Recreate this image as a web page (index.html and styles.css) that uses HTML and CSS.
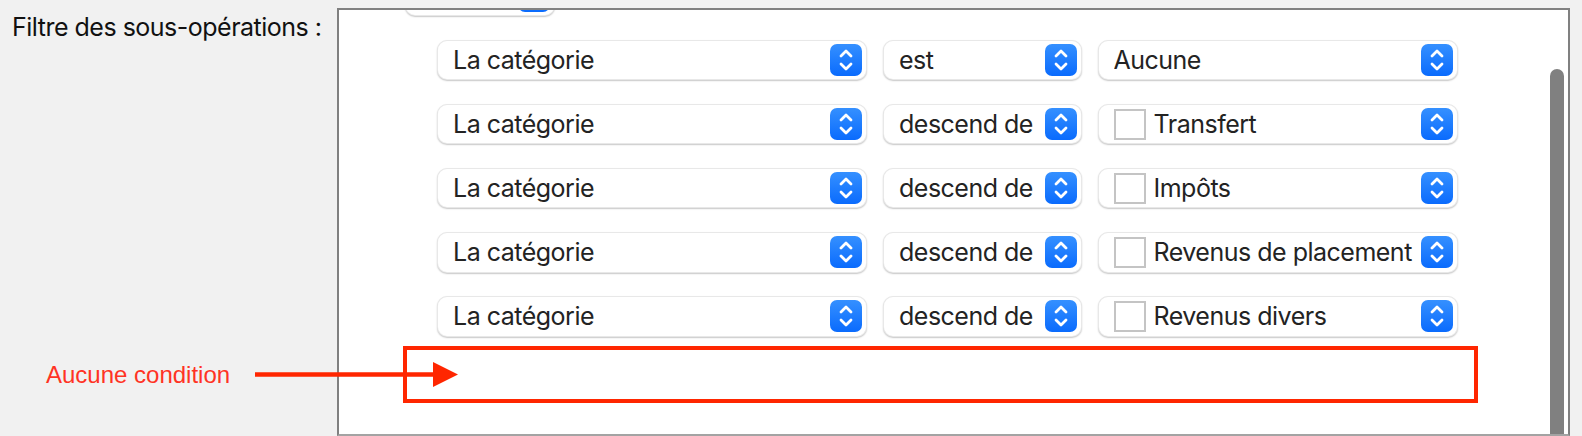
FILE: index.html
```html
<!DOCTYPE html>
<html lang="fr">
<head>
    <meta charset="UTF-8">
    <meta name="viewport" content="width=device-width, initial-scale=1.0">
    <title>Filtre des sous-opérations</title>
    <link rel="stylesheet" href="styles.css">
</head>
<body>
    <div class="page">
        <div class="field-label">Filtre des sous-opérations :</div>

        <div class="editor">
            <div class="rows">
                <!-- ligne parente, coupée par le défilement -->
                <div class="row row-group">
                    <div class="popup popup-group">
                        <span class="popup-text"></span>
                        <svg class="stepper" viewBox="0 0 32 32"><path d="M11 12 L16 7 L21 12 M11 20 L16 25 L21 20"/></svg>
                    </div>
                </div>

                <div class="row">
                    <div class="popup popup-field"><span class="popup-text">La catégorie</span>
                        <svg class="stepper" viewBox="0 0 32 32"><path d="M11 12 L16 7 L21 12 M11 20 L16 25 L21 20"/></svg></div>
                    <div class="popup popup-op"><span class="popup-text">est</span>
                        <svg class="stepper" viewBox="0 0 32 32"><path d="M11 12 L16 7 L21 12 M11 20 L16 25 L21 20"/></svg></div>
                    <div class="popup popup-value"><span class="popup-text">Aucune</span>
                        <svg class="stepper" viewBox="0 0 32 32"><path d="M11 12 L16 7 L21 12 M11 20 L16 25 L21 20"/></svg></div>
                </div>

                <div class="row">
                    <div class="popup popup-field"><span class="popup-text">La catégorie</span>
                        <svg class="stepper" viewBox="0 0 32 32"><path d="M11 12 L16 7 L21 12 M11 20 L16 25 L21 20"/></svg></div>
                    <div class="popup popup-op"><span class="popup-text">descend de</span>
                        <svg class="stepper" viewBox="0 0 32 32"><path d="M11 12 L16 7 L21 12 M11 20 L16 25 L21 20"/></svg></div>
                    <div class="popup popup-value"><span class="check"></span><span class="popup-text">Transfert</span>
                        <svg class="stepper" viewBox="0 0 32 32"><path d="M11 12 L16 7 L21 12 M11 20 L16 25 L21 20"/></svg></div>
                </div>

                <div class="row">
                    <div class="popup popup-field"><span class="popup-text">La catégorie</span>
                        <svg class="stepper" viewBox="0 0 32 32"><path d="M11 12 L16 7 L21 12 M11 20 L16 25 L21 20"/></svg></div>
                    <div class="popup popup-op"><span class="popup-text">descend de</span>
                        <svg class="stepper" viewBox="0 0 32 32"><path d="M11 12 L16 7 L21 12 M11 20 L16 25 L21 20"/></svg></div>
                    <div class="popup popup-value"><span class="check"></span><span class="popup-text">Impôts</span>
                        <svg class="stepper" viewBox="0 0 32 32"><path d="M11 12 L16 7 L21 12 M11 20 L16 25 L21 20"/></svg></div>
                </div>

                <div class="row">
                    <div class="popup popup-field"><span class="popup-text">La catégorie</span>
                        <svg class="stepper" viewBox="0 0 32 32"><path d="M11 12 L16 7 L21 12 M11 20 L16 25 L21 20"/></svg></div>
                    <div class="popup popup-op"><span class="popup-text">descend de</span>
                        <svg class="stepper" viewBox="0 0 32 32"><path d="M11 12 L16 7 L21 12 M11 20 L16 25 L21 20"/></svg></div>
                    <div class="popup popup-value"><span class="check"></span><span class="popup-text">Revenus de placement</span>
                        <svg class="stepper" viewBox="0 0 32 32"><path d="M11 12 L16 7 L21 12 M11 20 L16 25 L21 20"/></svg></div>
                </div>

                <div class="row">
                    <div class="popup popup-field"><span class="popup-text">La catégorie</span>
                        <svg class="stepper" viewBox="0 0 32 32"><path d="M11 12 L16 7 L21 12 M11 20 L16 25 L21 20"/></svg></div>
                    <div class="popup popup-op"><span class="popup-text">descend de</span>
                        <svg class="stepper" viewBox="0 0 32 32"><path d="M11 12 L16 7 L21 12 M11 20 L16 25 L21 20"/></svg></div>
                    <div class="popup popup-value"><span class="check"></span><span class="popup-text">Revenus divers</span>
                        <svg class="stepper" viewBox="0 0 32 32"><path d="M11 12 L16 7 L21 12 M11 20 L16 25 L21 20"/></svg></div>
                </div>
            </div>

            <div class="scroller"></div>
        </div>
    </div>

    <!-- annotation -->
    <div class="note-text">Aucune condition</div>
    <svg class="note-arrow" viewBox="0 0 203 25"><line x1="0" y1="12.5" x2="182" y2="12.5"/><polygon points="178,0 203,12.5 178,25"/></svg>
    <div class="note-box"></div>
</body>
</html>
```

FILE: styles.css
```css
body {
    margin: 0;
    background: #f1f1f1;
    font-family: Inter, "Noto Sans", sans-serif;
    position: relative;
    height: 436px;
    overflow: hidden;
}
.page {
    display: flex;
    align-items: flex-start;
}
.field-label {
    width: 337px;
    box-sizing: border-box;
    padding: 11px 0 0 12px;
    font-size: 25px;
    letter-spacing: -0.5px;
    line-height: 32px;
    color: #111;
    white-space: nowrap;
}
.editor {
    position: relative;
    margin-top: 8px;
    width: 1233px;
    height: 428px;
    box-sizing: border-box;
    border: 2px solid #808080;
    border-bottom-color: #a3a3a3;
    background: #fff;
    overflow: hidden;
}
.rows {
    display: flex;
    flex-direction: column;
    gap: 23.6px;
    margin-top: -34.3px;
    padding-left: 98px;
}
.row {
    display: flex;
    gap: 16px;
}
.row-group {
    margin-left: -32px;
}
.popup {
    height: 40.5px;
    box-sizing: border-box;
    display: flex;
    align-items: center;
    padding: 0 4px 0 15px;
    background: #fff;
    border: 1px solid rgba(0, 0, 0, 0.09);
    border-radius: 10px;
    box-shadow: 0 1px 1.5px rgba(0, 0, 0, 0.22);
    font-size: 25px;
    letter-spacing: -0.5px;
    color: #232323;
}
.popup-group { width: 150px; }
.popup-field { width: 430px; }
.popup-op { width: 198.5px; }
.popup-value { width: 360px; }
.popup-text {
    flex: 1;
    white-space: nowrap;
    overflow: hidden;
}
.check {
    width: 32px;
    height: 31px;
    box-sizing: border-box;
    border: 2px solid #c4c4c4;
    margin-right: 8px;
    flex-shrink: 0;
}
.stepper {
    width: 32px;
    height: 32px;
    flex-shrink: 0;
    border-radius: 7px;
    background: linear-gradient(#3590ff, #0a6bfd);
}
.stepper path {
    fill: none;
    stroke: #fff;
    stroke-width: 2.8;
    stroke-linecap: round;
    stroke-linejoin: round;
}
.scroller {
    position: absolute;
    right: 4px;
    top: 59px;
    bottom: 0;
    width: 14px;
    background: #808080;
    border-radius: 7px 7px 0 0;
}
.note-text {
    position: absolute;
    left: 46px;
    top: 363px;
    font-family: "Liberation Sans", Arial, sans-serif;
    font-size: 24px;
    line-height: 24px;
    color: #ff3324;
}
.note-arrow {
    position: absolute;
    left: 255px;
    top: 362px;
    width: 203px;
    height: 25px;
}
.note-arrow line {
    stroke: #ff2600;
    stroke-width: 4.7;
}
.note-arrow polygon {
    fill: #ff2600;
}
.note-box {
    position: absolute;
    left: 403px;
    top: 346px;
    width: 1075px;
    height: 57px;
    box-sizing: border-box;
    border: 4.5px solid #ff2600;
}
```
